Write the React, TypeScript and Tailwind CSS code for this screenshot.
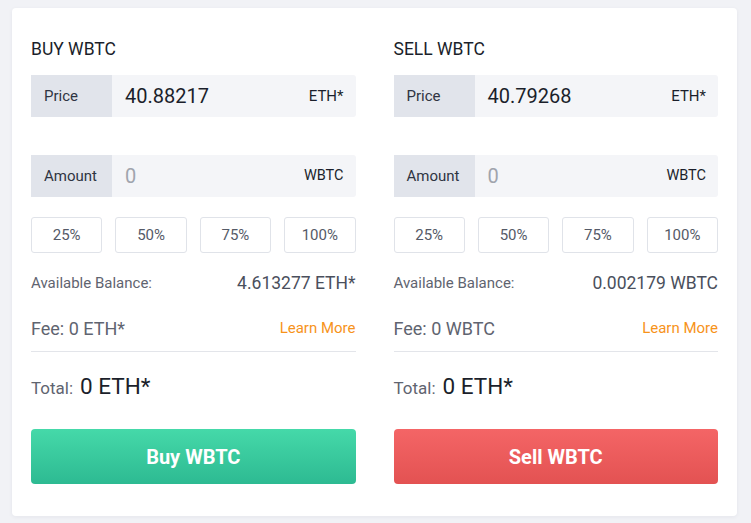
import React from 'react';

type Side = {
  title: string;
  price: string;
  balance: string;
  fee: string;
  button: string;
  buy: boolean;
};

const sides: Side[] = [
  { title: 'BUY WBTC', price: '40.88217', balance: '4.613277 ETH*', fee: 'Fee: 0 ETH*', button: 'Buy WBTC', buy: true },
  { title: 'SELL WBTC', price: '40.79268', balance: '0.002179 WBTC', fee: 'Fee: 0 WBTC', button: 'Sell WBTC', buy: false },
];

const TradeColumn = ({ side }: { side: Side }) => {
  return (
    <div className='px-[19px] pt-[29px] pb-[32px] flex flex-col'>
      <div className='h-6 flex items-center text-[17.5px] text-[#1b1f2b]'>{side.title}</div>

      <div className='mt-[14px] h-[42px] flex'>
        <div className='w-[81px] bg-[#e1e4eb] flex items-center pl-[13px] text-[15px] text-[#2f3442]'>Price</div>
        <div className='flex-1 bg-[#f4f5f8] rounded-r-[3px] flex items-center justify-between pl-[13px] pr-[12px]'>
          <span className='text-[20px] text-[#1b1f2b]'>{side.price}</span>
          <span className='text-[15px] text-[#1b1f2b]'>ETH*</span>
        </div>
      </div>

      <div className='mt-[38px] h-[42px] flex'>
        <div className='w-[81px] bg-[#e1e4eb] flex items-center pl-[13px] text-[15px] text-[#2f3442]'>Amount</div>
        <div className='flex-1 bg-[#f4f5f8] rounded-r-[3px] flex items-center justify-between pl-[13px] pr-[12px]'>
          <span className='text-[20px] text-[#a0a4ad]'>0</span>
          <span className='text-[14.5px] text-[#1b1f2b]'>WBTC</span>
        </div>
      </div>

      <div className='mt-[20px] grid grid-cols-4 gap-[13px]'>
        {['25%', '50%', '75%', '100%'].map((p) => (
          <button
            key={p}
            className='h-[36px] border border-[#e0e3e9] rounded-[3px] bg-white text-[15px] text-[#555a67] flex items-center justify-center'
          >
            {p}
          </button>
        ))}
      </div>

      <div className='mt-[18px] h-6 flex items-center justify-between'>
        <span className='text-[15px] text-[#5f6470]'>Available Balance:</span>
        <span className='text-[17.5px] text-[#4a4f5c]'>{side.balance}</span>
      </div>

      <div className='mt-[21px] h-6 flex items-center justify-between'>
        <span className='text-[18px] text-[#5f6470]'>{side.fee}</span>
        <span className='text-[15px] text-[#f7931a]'>Learn More</span>
      </div>

      <div className='mt-[11px] border-t border-[#e3e5ea]' />

      <div className='mt-[18px] h-8 flex items-baseline leading-8'>
        <span className='text-[17px] text-[#5f6470]'>Total:</span>
        <span className='ml-[7px] text-[22.5px] text-[#1b1f2b]'>0 ETH*</span>
      </div>

      <button
        className={
          side.buy
            ? 'mt-[27px] h-[55px] rounded-[4px] bg-gradient-to-b from-[#45d9a9] to-[#2dba92] text-white font-bold text-[20px]'
            : 'mt-[27px] h-[55px] rounded-[4px] bg-gradient-to-b from-[#f46566] to-[#e35252] text-white font-bold text-[20px]'
        }
      >
        {side.button}
      </button>
    </div>
  );
};

const App = () => {
  return (
    <div className='min-h-[523px] bg-[#f1f2f6] pt-[8px] pl-[12px]' style={{ fontFamily: 'Roboto, "Noto Sans", sans-serif' }}>
      <div className='w-[725px] bg-white rounded-[4px] shadow-[0_1px_4px_rgba(30,40,70,0.06)] grid grid-cols-2'>
        {sides.map((s) => (
          <TradeColumn key={s.title} side={s} />
        ))}
      </div>
    </div>
  );
};

export default App;
